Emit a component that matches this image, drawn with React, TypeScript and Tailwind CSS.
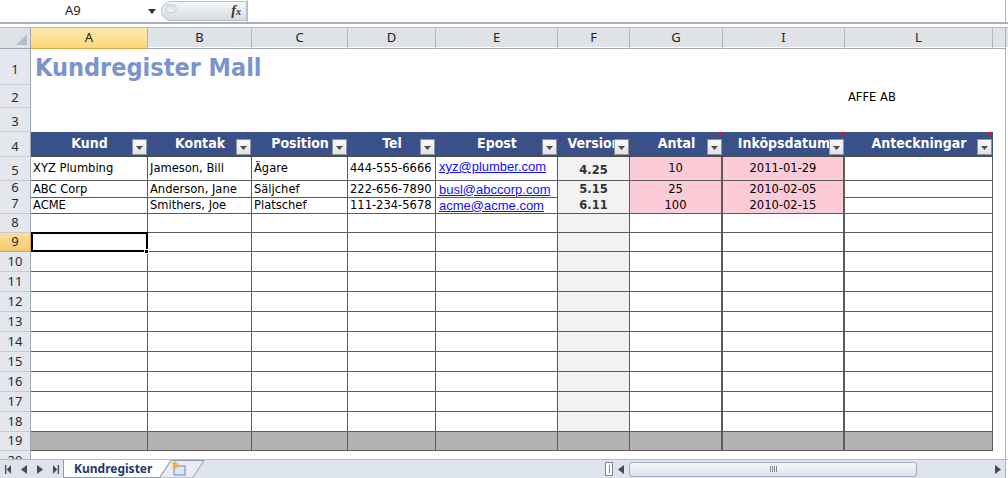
import React from "react";

const GRID =
  "grid grid-cols-[31px_117px_104px_96px_88px_122px_72px_93px_122px_148px_12px_3px]";

const customers = [
  { h: "h-[24px]", kund: "XYZ Plumbing", kontakt: "Jameson, Bill", pos: "Ägare", tel: "444-555-6666", epost: "xyz@plumber.com", ver: "4.25", antal: "10", datum: "2011-01-29" },
  { h: "h-[16px]", kund: "ABC Corp", kontakt: "Anderson, Jane", pos: "Säljchef", tel: "222-656-7890", epost: "busl@abccorp.com", ver: "5.15", antal: "25", datum: "2010-02-05" },
  { h: "h-[17px]", kund: "ACME", kontakt: "Smithers, Joe", pos: "Platschef", tel: "111-234-5678", epost: "acme@acme.com", ver: "6.11", antal: "100", datum: "2010-02-15" },
];

const headers = [
  { label: "Kund", note: false },
  { label: "Kontak", note: false },
  { label: "Position", note: false },
  { label: "Tel", note: false },
  { label: "Epost", note: false },
  { label: "Version", note: false },
  { label: "Antal", note: true },
  { label: "Inköpsdatum", note: true },
  { label: "Anteckningar", note: true },
];

function RowHead({ n, sel = false, pb = "pb-[4px]" }: { n: number; sel?: boolean; pb?: string }) {
  return (
    <div
      className={`flex items-end justify-center ${pb} border-r border-b font-['Noto_Sans',sans-serif] text-[13px] leading-[12px] text-[#2a2a2a] ${
        sel
          ? "bg-linear-to-b from-[#fadf9c] to-[#f5c86c] border-r-[#d9a24a] border-b-[#e0a443]"
          : "bg-[#e4e8ee] border-r-[#9ea6b0] border-b-[#c5cbd3]"
      }`}
    >
      {n}
    </div>
  );
}

function Strip() {
  return <div className="border-l border-[#a9b1bc] bg-white" />;
}

function FilterBtn() {
  return (
    <span className="absolute right-[1px] bottom-[1px] w-[15px] h-[16px] border border-[#8c939c] bg-linear-to-b from-[#fbfbfb] to-[#dfe2e6] flex items-end justify-center pb-[4px]">
      <svg width="7" height="4" viewBox="0 0 7 4">
        <path d="M0 0h7L3.5 4z" fill="#4d4d4d" />
      </svg>
    </span>
  );
}

function NoteMark() {
  return (
    <svg className="absolute top-0 right-[1px]" width="5" height="5" viewBox="0 0 5 5">
      <path d="M0 0h5v5z" fill="#e8101a" />
    </svg>
  );
}

const line = "border-r border-b border-[#5c5c5c]";
const txt = "overflow-hidden whitespace-nowrap flex items-center pl-[2px] text-[12.8px] leading-none";

function EmptyRow({ n, h, sel = false }: { n: number; h: string; sel?: boolean }) {
  return (
    <div className={`${GRID} ${h}`}>
      <RowHead n={n} sel={sel} />
      <div className={`${line} relative`}>
        {sel && (
          <>
            <div className="absolute left-0 -top-[1px] w-[117px] h-[20px] border-2 border-black z-10" />
            <div className="absolute -right-[2px] -bottom-[3px] w-[5px] h-[5px] bg-black border border-white z-20" />
          </>
        )}
      </div>
      <div className={line} />
      <div className={line} />
      <div className={line} />
      <div className={line} />
      <div className={`${line} bg-[#f2f2f2]`} />
      <div className={`${line} border-r-2`} />
      <div className={`${line} border-r-2`} />
      <div className={line} />
      <div className="bg-white" />
      <Strip />
    </div>
  );
}

function Arrow({ dir }: { dir: "l" | "r" }) {
  return (
    <svg width="6" height="9" viewBox="0 0 6 9">
      <path d={dir === "l" ? "M6 0v9L0 4.5z" : "M0 0v9l6-4.5z"} fill="#4a4a4a" />
    </svg>
  );
}

export default function App() {
  return (
    <div className="w-[1008px] h-[478px] overflow-hidden bg-white font-['DejaVu_Sans_Condensed','DejaVu_Sans',sans-serif] font-stretch-condensed text-black">
      {/* formula bar */}
      <div className="h-[24px] flex border-b-2 border-[#a8b0ba] bg-white">
        <div className="w-[161px] relative flex items-center font-['Noto_Sans',sans-serif] text-[13px] text-[#1e1e1e]">
          <span className="ml-[65px]">A9</span>
          <svg className="absolute left-[148px] top-[9px]" width="8" height="5" viewBox="0 0 8 5">
            <path d="M0 0h8L4 5z" fill="#333" />
          </svg>
        </div>
        <div className="w-[86px] my-[1px] rounded-l-[11px] border border-[#b9c0c9] bg-linear-to-b from-[#f5f6f8] to-[#d8dde3] relative flex items-center justify-end pr-[5px]">
          <div className="absolute left-[3px] top-[2px] w-[12px] h-[9px] rounded-full bg-linear-to-b from-[#d7dbe0] to-[#f4f5f7] border border-[#c9ced5]" />
          <span className="font-['Liberation_Serif',serif] italic font-bold text-[14px] text-[#333] leading-none">
            f<span className="text-[10px]">x</span>
          </span>
        </div>
        <div className="flex-1 border-l border-[#b9c0c9]" />
        <div className="w-[3px] border-l border-[#a9b1bc]" />
      </div>
      <div className="h-[3px] bg-white" />

      {/* column headers */}
      <div className={`${GRID} h-[20px] border-t border-[#b7bdc5] bg-[#dfe3e8] font-['Noto_Sans',sans-serif] text-[13px] text-[#222]`}>
        <div className="relative border-r border-b border-r-[#9ea6b0] border-b-[#9ea6b0] bg-[#dfe3e8]">
          <svg className="absolute right-[3px] bottom-[3px]" width="11" height="11" viewBox="0 0 11 11">
            <path d="M11 0v11H0z" fill="#b6bcc4" />
          </svg>
        </div>
        <div className="flex items-center justify-center border-r border-b border-r-[#e0b050] border-b-[#e3a43f] bg-linear-to-b from-[#fbe7ad] to-[#fbd978]">A</div>
        {["B", "C", "D", "E", "F", "G", "I", "L"].map((c) => (
          <div key={c} className="flex items-center justify-center border-r border-b border-r-[#b3b9c1] border-b-[#9ea6b0]">
            {c}
          </div>
        ))}
        <div className="border-b border-[#9ea6b0]" />
        <div className="border-l border-b border-[#a9b1bc] bg-[#dfe3e8]" />
      </div>

      {/* row 1 */}
      <div className={`${GRID} h-[38px]`}>
        <RowHead n={1} pb="pb-[9px]" />
        <div className="flex items-end pl-[4px] pb-[2px]">
          <span className="whitespace-nowrap font-bold text-[25px] leading-[30px] text-[#7b93cf]">Kundregister Mall</span>
        </div>
        <div />
        <div />
        <div />
        <div />
        <div />
        <div />
        <div />
        <div />
        <div />
        <Strip />
      </div>

      {/* row 2 */}
      <div className={`${GRID} h-[23px]`}>
        <RowHead n={2} />
        <div />
        <div />
        <div />
        <div />
        <div />
        <div />
        <div />
        <div />
        <div className="flex items-center pl-[3px] text-[12.8px] whitespace-nowrap">AFFE AB</div>
        <div />
        <Strip />
      </div>

      {/* row 3 */}
      <div className={`${GRID} h-[24px]`}>
        <RowHead n={3} />
        <div />
        <div />
        <div />
        <div />
        <div />
        <div />
        <div />
        <div />
        <div />
        <div />
        <Strip />
      </div>

      {/* row 4 – table header */}
      <div className={`${GRID} h-[25px]`}>
        <RowHead n={4} />
        {headers.map((hd) => (
          <div
            key={hd.label}
            className="relative overflow-hidden bg-[#3a5089] border-b border-[#4b4b4b] flex items-center justify-center pb-[2px] text-white font-bold text-[14px] whitespace-nowrap"
          >
            <span>{hd.label}</span>
            {hd.note && <NoteMark />}
            <FilterBtn />
          </div>
        ))}
        <div className="bg-white" />
        <Strip />
      </div>

      {/* rows 5-7 data */}
      {customers.map((c, i) => (
        <div key={c.kund} className={`${GRID} ${c.h}`}>
          <RowHead n={5 + i} />
          <div className={`${line} ${txt}`}>{c.kund}</div>
          <div className={`${line} ${txt}`}>{c.kontakt}</div>
          <div className={`${line} ${txt}`}>{c.pos}</div>
          <div className={`${line} ${txt}`}>{c.tel}</div>
          <div className={`${line} overflow-hidden whitespace-nowrap flex ${i === 0 ? "items-start pt-[3px]" : "items-center"} pl-[3px] font-['Liberation_Sans',sans-serif] font-stretch-normal text-[13px] leading-none text-[#1010ff] underline`}>
            {c.epost}
          </div>
          <div className={`${line} bg-[#f2f2f2] flex ${i === 0 ? "items-end pb-[3px]" : "items-center"} justify-center font-bold text-[12.8px] leading-none text-[#333]`}>{c.ver}</div>
          <div className={`${line} border-r-2 bg-[#fbcbd7] flex items-center justify-center text-[12.8px] leading-none`}>{c.antal}</div>
          <div className={`${line} border-r-2 bg-[#fbcbd7] flex items-center justify-center text-[12.8px] leading-none`}>{c.datum}</div>
          <div className={line} />
          <div className="bg-white" />
          <Strip />
        </div>
      ))}

      {/* rows 8-18 */}
      <EmptyRow n={8} h="h-[19px]" />
      <EmptyRow n={9} h="h-[19px]" sel />
      {[10, 11, 12, 13, 14, 15, 16, 17, 18].map((n) => (
        <EmptyRow key={n} n={n} h="h-[20px]" />
      ))}

      {/* row 19 */}
      <div className={`${GRID} h-[19px]`}>
        <RowHead n={19} />
        <div className={`${line} bg-[#b3b3b3]`} />
        <div className={`${line} bg-[#b3b3b3]`} />
        <div className={`${line} bg-[#b3b3b3]`} />
        <div className={`${line} bg-[#b3b3b3]`} />
        <div className={`${line} bg-[#b3b3b3]`} />
        <div className={`${line} bg-[#b3b3b3]`} />
        <div className={`${line} border-r-2 bg-[#b3b3b3]`} />
        <div className={`${line} border-r-2 bg-[#b3b3b3]`} />
        <div className={`${line} bg-[#b3b3b3]`} />
        <div className="bg-white" />
        <Strip />
      </div>

      {/* row 20 (partly hidden behind the tab bar, as in Excel) */}
      <div className={`${GRID} h-[8px] overflow-hidden`}>
        <div className="flex items-start justify-center pt-[3px] bg-[#e4e8ee] border-r border-[#9ea6b0] font-['Noto_Sans',sans-serif] text-[13px] leading-[12px] text-[#2a2a2a]">
          20
        </div>
        <div className="col-span-10" />
        <Strip />
      </div>

      {/* sheet tabs + scrollbar */}
      <div className="h-[19px] flex items-center border-t border-[#b4bcc7] bg-[#dde4ee]">
        <div className="w-[63px] flex items-center gap-[10px] pl-[5px]">
          <svg width="6" height="9" viewBox="0 0 6 9">
            <path d="M0 0h1.3v9H0zM6 0v9L1.8 4.5z" fill="#4a4a4a" />
          </svg>
          <Arrow dir="l" />
          <Arrow dir="r" />
          <svg width="6" height="9" viewBox="0 0 6 9">
            <path d="M0 0v9l4.2-4.5zM4.7 0H6v9H4.7z" fill="#4a4a4a" />
          </svg>
        </div>
        <div className="relative w-[142px] h-full">
          <svg className="absolute inset-0" width="142" height="18" viewBox="0 0 142 18">
            <path d="M96.5 18L108 0.5H141L129.5 18z" fill="#e9edf3" stroke="#8f9aab" />
            <path d="M0 0H108L96.5 17.5H0z" fill="#ffffff" />
            <path d="M108 0.5L96.5 17.5H0.5V0" fill="none" stroke="#8f9aab" />
            <rect x="111" y="6" width="11" height="9" fill="#dbe6f4" stroke="#6f86a6" />
            <path d="M112 1l1 2.5 2.5-1.5-1.2 2.6 2.7.6-2.6 1 1 2.4-2.3-1.3-1.2 2.3-.5-2.6-2.6.3 2-1.7-1.8-2z" fill="#f5b41c" />
          </svg>
          <span className="absolute left-[11px] top-[1px] font-['Noto_Sans',sans-serif] font-bold text-[12px] leading-[16px] text-[#24386a]">
            Kundregister
          </span>
        </div>
        <div className="w-[400px]" />
        <div className="w-[8px] h-[14px] border border-[#7f8998] bg-white flex items-center justify-center">
          <div className="w-[1px] h-[8px] bg-[#7f8998]" />
        </div>
        <div className="ml-[5px]">
          <Arrow dir="l" />
        </div>
        <div className="ml-[5px] w-[288px] h-[15px] rounded-[3px] border border-[#a2acba] bg-linear-to-b from-[#f6f8fa] to-[#dde3ea] flex items-center justify-center gap-[1px]">
          <div className="w-[1px] h-[6px] bg-[#7f8796]" />
          <div className="w-[1px] h-[6px] bg-[#7f8796]" />
          <div className="w-[1px] h-[6px] bg-[#7f8796]" />
          <div className="w-[1px] h-[6px] bg-[#7f8796]" />
        </div>
        <div className="flex-1" />
        <Arrow dir="r" />
        <div className="w-[4px]" />
        <div className="w-[3px] h-full border-l border-[#a9b1bc] bg-white" />
      </div>
    </div>
  );
}
